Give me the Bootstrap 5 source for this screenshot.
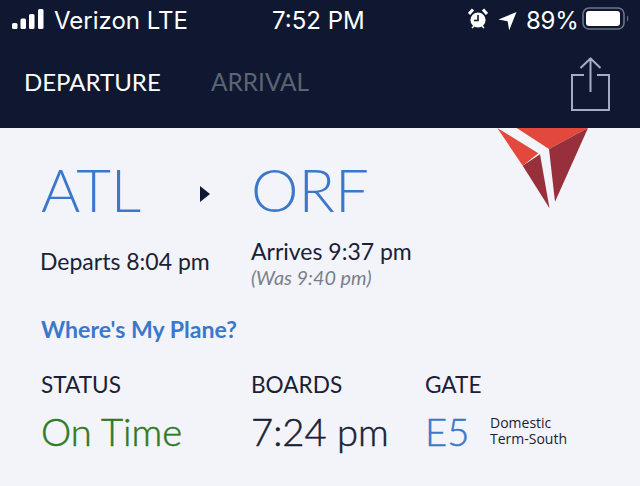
<!DOCTYPE html>
<html>
<head>
    <title>Flight Status</title>
    <link rel="stylesheet" href="https://cdn.jsdelivr.net/npm/bootstrap@5.3.0/dist/css/bootstrap.min.css">
    <style>
        /* Global styles */
        html, body { width: 640px; height: 486px; overflow: hidden; }
        body { background-color: #f2f4f9; color: #1a2136; font-family: Lato, "Open Sans", sans-serif; position: relative; }

        /* Header */
        .top-head { background-color: #0f1830; height: 128px; color: #fff; }
        .status-strip { height: 40px; padding: 2px 0 0 12px; font-family: Inter, sans-serif; font-size: 24px; line-height: 28px; }
        .carrier { margin-left: 10px; width: 218px; }
        .clock { width: 196px; }
        .status-right { gap: 10px; }
        .bar-svg { margin-bottom: 4px; }
        .pct-text { margin-left: -1px; letter-spacing: -0.3px; }
        .batt-icon { margin-left: -6px; }
        .tabs-row { height: 88px; padding: 0 29px 4px 24px; }
        .tab-on { font-size: 24px; color: #fff; width: 187px; }
        .tab-off { font-size: 24.4px; color: #5d6473; }
        .share-icon { margin-top: 4px; }
        .tail-logo { position: absolute; left: 497px; top: 128px; }

        /* Flight info */
        .info-wrap { padding: 24px 0 0 41px; }
        .col-a { width: 210px; }
        .col-b { width: 174px; }
        .airport { font-size: 60px; font-weight: 300; line-height: 74px; color: #3b78cc; }
        .route-arrow { margin: 10px 41px 0 auto; }
        .time-row { height: 64px; margin-top: 11px; }
        .time-text { font-size: 23px; line-height: 28px; }
        .time-low { padding-top: 10px; margin-left: -1px; margin-right: 1px; }
        .time-was { font-size: 19.8px; line-height: 24px; font-style: italic; color: #7a7f8c; }
        .plane-link { font-size: 23.1px; font-weight: 700; color: #3b78cc; text-decoration: none; display: block; margin-top: 14px; line-height: 28px; }
        .info-label { font-size: 22.6px; line-height: 26px; margin-top: 29px; }
        .info-big { font-size: 38.2px; line-height: 48px; margin-top: 9px; font-weight: 300; -webkit-text-stroke: 0.5px; }
        .status-good { color: #2f7a1f; }
        .gate-value { color: #3b78cc; width: 65px; }
        .gate-note { font-size: 14px; line-height: 16px; font-family: "Open Sans", sans-serif; }
    </style>
    <script src="https://cdn.jsdelivr.net/npm/bootstrap@5.3.0/dist/js/bootstrap.bundle.min.js"></script>
</head>
<body>
    <div class="top-head">
        <!-- Phone status bar -->
        <div class="status-strip d-flex align-items-center">
            <svg class="bar-svg" width="32" height="22" viewBox="0 0 32 22" fill="#fff">
                <rect x="0" y="15" width="5.5" height="6" rx="1.5"/>
                <rect x="8.5" y="10.5" width="5.5" height="10.5" rx="1.5"/>
                <rect x="17" y="6" width="5.5" height="15" rx="1.5"/>
                <rect x="26" y="1" width="5.5" height="20" rx="1.5"/>
            </svg>
            <span class="carrier">Verizon LTE</span>
            <span class="clock">7:52 PM</span>
            <div class="status-right d-flex align-items-center">
                <svg class="bar-svg" width="20" height="22" viewBox="0 0 20 22">
                    <circle cx="10" cy="12" r="7.6" fill="#fff"/>
                    <path d="M10 7v5.5H6" fill="none" stroke="#0f1830" stroke-width="1.6"/>
                    <path d="M1 6l4-4.5M19 6l-4-4.5" stroke="#fff" stroke-width="3" fill="none"/>
                    <path d="M4 20l2-2M16 20l-2-2" stroke="#fff" stroke-width="1.6"/>
                </svg>
                <svg width="19" height="20" viewBox="0 0 19 20" fill="#fff"><path d="M18.500 1L0.500 8.600 9.600 10.300 11.200 19.200z"/></svg>
                <span class="pct-text">89%</span>
                <svg class="bar-svg batt-icon" width="48" height="24" viewBox="0 0 48 24">
                    <rect x="1" y="1" width="41" height="21" rx="6" fill="none" stroke="#6e7486" stroke-width="1.6"/>
                    <rect x="4" y="4" width="34" height="15" rx="3" fill="#fff"/>
                    <path d="M45 8.500c1.600.6 1.600 5.400 0 6z" fill="#6e7486"/>
                </svg>
            </div>
        </div>
        <!-- Departure / arrival tabs -->
        <div class="tabs-row d-flex align-items-center">
            <span class="tab-on">DEPARTURE</span>
            <span class="tab-off flex-grow-1">ARRIVAL</span>
            <svg class="share-icon" width="40" height="54" viewBox="0 0 40 54" fill="none" stroke="#a3acc0" stroke-width="2">
                <path d="M13 18H1v35h37V18H26"/>
                <path d="M19.500 35V2M9.500 11l10-9.500 10 9.500"/>
            </svg>
        </div>
    </div>

    <!-- Delta widget logo -->
    <svg class="tail-logo" width="92" height="82" viewBox="497 128 92 82">
        <path d="M516.700 128H588L549 149z" fill="#e2483b"/>
        <path d="M497.300 128L538.300 153.300 522.700 165.700z" fill="#e2483b"/>
        <path d="M522.700 165.700L540 154.300 549.500 208.300z" fill="#97303a"/>
        <path d="M549 149L588 128 555 201.700z" fill="#97303a"/>
    </svg>

    <div class="info-wrap">
        <div class="d-flex">
            <div class="col-a d-flex align-items-center">
                <span class="airport">ATL</span>
                <svg class="route-arrow" width="10" height="16" viewBox="0 0 10 16" fill="#0f1830"><path d="M0 0l10 8-10 8z"/></svg>
            </div>
            <div class="airport">ORF</div>
        </div>
        <div class="time-row d-flex">
            <div class="col-a time-text time-low">Departs 8:04 pm</div>
            <div>
                <div class="time-text">Arrives 9:37 pm</div>
                <div class="time-was">(Was 9:40 pm)</div>
            </div>
        </div>
        <a class="plane-link" href="#">Where's My Plane?</a>
        <div class="d-flex">
            <div class="col-a">
                <div class="info-label">STATUS</div>
                <div class="info-big status-good">On Time</div>
            </div>
            <div class="col-b">
                <div class="info-label">BOARDS</div>
                <div class="info-big">7:24 pm</div>
            </div>
            <div>
                <div class="info-label">GATE</div>
                <div class="d-flex align-items-center">
                    <div class="info-big gate-value">E5</div>
                    <div class="gate-note mt-2">Domestic<br>Term-South</div>
                </div>
            </div>
        </div>
    </div>
</body>
</html>
